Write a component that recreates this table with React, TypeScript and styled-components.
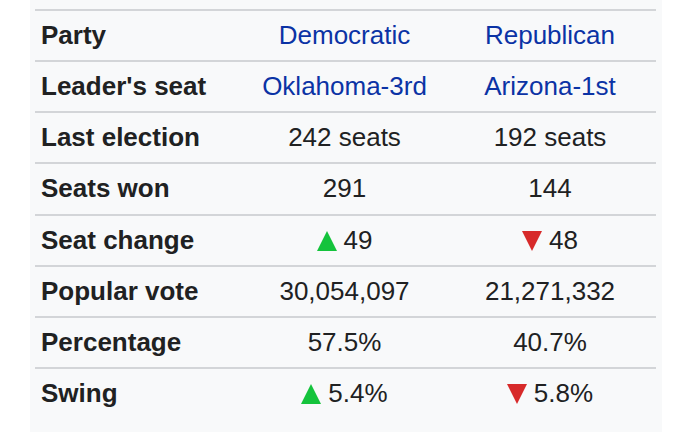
import React from "react";
import styled, { createGlobalStyle } from "styled-components";

const GlobalStyle = createGlobalStyle`
  html, body {
    margin: 0;
    padding: 0;
    background: #ffffff;
  }
  body {
    font-family: "Liberation Sans", Arial, Helvetica, sans-serif;
    color: #202122;
  }
`;

const Page = styled.div`
  width: 690px;
  height: 432px;
  overflow: hidden;
  padding-left: 30px;
  box-sizing: border-box;
`;

const Panel = styled.div`
  width: 632px;
  height: 432px;
  background: #f8f9fa;
  padding: 9px 6px 0 5px;
  box-sizing: border-box;
`;

const Row = styled.div`
  display: grid;
  grid-template-columns: 210px 199px 212px;
  height: 51.15px;
  border-top: 2px solid #d3d5d8;
  padding-top: 9px;
  box-sizing: border-box;
  align-items: start;
`;

const Label = styled.div`
  font-size: 26px;
  line-height: 30px;
  font-weight: 700;
  padding-left: 6px;
  white-space: nowrap;
`;

const Value = styled.div<{ $link?: boolean }>`
  font-size: 26px;
  line-height: 30px;
  text-align: center;
  white-space: nowrap;
  color: ${(p) => (p.$link ? "#0b33a5" : "#202122")};
  display: flex;
  justify-content: center;
  align-items: flex-start;
  gap: 7px;
`;

const Arrow = styled.svg`
  width: 20px;
  height: 20px;
  margin-top: 6px;
  flex: none;
`;

type Change = "up" | "down";

const Trend: React.FC<{ dir: Change }> = ({ dir }) =>
  dir === "up" ? (
    <Arrow viewBox="0 0 20 20">
      <polygon points="10,0 20,20 0,20" fill="#14c33c" />
    </Arrow>
  ) : (
    <Arrow viewBox="0 0 20 20">
      <polygon points="0,0 20,0 10,20" fill="#d72a2a" />
    </Arrow>
  );

interface Cell {
  text: string;
  link?: boolean;
  trend?: Change;
}

interface RowData {
  label: string;
  dem: Cell;
  rep: Cell;
}

const rows: RowData[] = [
  { label: "Party", dem: { text: "Democratic", link: true }, rep: { text: "Republican", link: true } },
  { label: "Leader's seat", dem: { text: "Oklahoma-3rd", link: true }, rep: { text: "Arizona-1st", link: true } },
  { label: "Last election", dem: { text: "242 seats" }, rep: { text: "192 seats" } },
  { label: "Seats won", dem: { text: "291" }, rep: { text: "144" } },
  { label: "Seat change", dem: { text: "49", trend: "up" }, rep: { text: "48", trend: "down" } },
  { label: "Popular vote", dem: { text: "30,054,097" }, rep: { text: "21,271,332" } },
  { label: "Percentage", dem: { text: "57.5%" }, rep: { text: "40.7%" } },
  { label: "Swing", dem: { text: "5.4%", trend: "up" }, rep: { text: "5.8%", trend: "down" } },
];

const ValueCell: React.FC<{ cell: Cell }> = ({ cell }) => (
  <Value $link={cell.link}>
    {cell.trend && <Trend dir={cell.trend} />}
    <span>{cell.text}</span>
  </Value>
);

const App: React.FC = () => {
  return (
    <>
      <GlobalStyle />
      <Page>
        <Panel>
          {rows.map((r) => (
            <Row key={r.label}>
              <Label>{r.label}</Label>
              <ValueCell cell={r.dem} />
              <ValueCell cell={r.rep} />
            </Row>
          ))}
        </Panel>
      </Page>
    </>
  );
};

export default App;
